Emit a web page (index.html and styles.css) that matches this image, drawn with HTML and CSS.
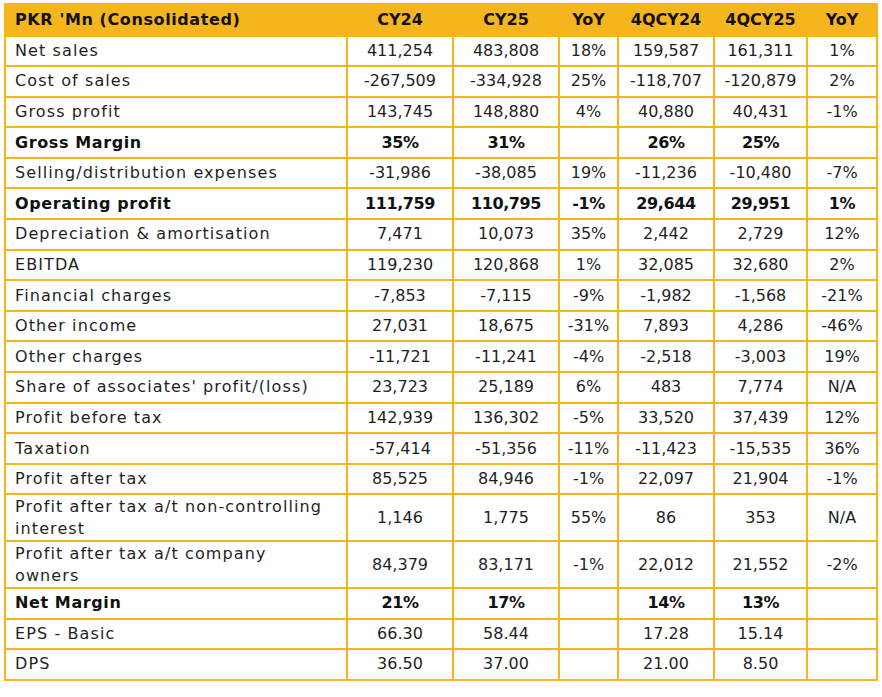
FILE: index.html
```html
<!DOCTYPE html>
<html>
<head>
<meta charset="utf-8">
<link rel="stylesheet" href="styles.css">
</head>
<body>
<div class="page">
<table class="fin">
  <colgroup>
    <col class="c-label"><col class="c-cy24"><col class="c-cy25"><col class="c-yoy1"><col class="c-q24"><col class="c-q25"><col class="c-yoy2">
  </colgroup>
  <thead>
    <tr class="head"><th class="label">PKR 'Mn (Consolidated)</th><th>CY24</th><th>CY25</th><th>YoY</th><th>4QCY24</th><th>4QCY25</th><th>YoY</th></tr>
  </thead>
  <tbody>
    <tr><td class="label">Net sales</td><td>411,254</td><td>483,808</td><td>18%</td><td>159,587</td><td>161,311</td><td>1%</td></tr>
    <tr><td class="label">Cost of sales</td><td>-267,509</td><td>-334,928</td><td>25%</td><td>-118,707</td><td>-120,879</td><td>2%</td></tr>
    <tr><td class="label">Gross profit</td><td>143,745</td><td>148,880</td><td>4%</td><td>40,880</td><td>40,431</td><td>-1%</td></tr>
    <tr class="bold"><td class="label">Gross Margin</td><td>35%</td><td>31%</td><td></td><td>26%</td><td>25%</td><td></td></tr>
    <tr><td class="label">Selling/distribution expenses</td><td>-31,986</td><td>-38,085</td><td>19%</td><td>-11,236</td><td>-10,480</td><td>-7%</td></tr>
    <tr class="bold"><td class="label">Operating profit</td><td>111,759</td><td>110,795</td><td>-1%</td><td>29,644</td><td>29,951</td><td>1%</td></tr>
    <tr><td class="label">Depreciation &amp; amortisation</td><td>7,471</td><td>10,073</td><td>35%</td><td>2,442</td><td>2,729</td><td>12%</td></tr>
    <tr><td class="label">EBITDA</td><td>119,230</td><td>120,868</td><td>1%</td><td>32,085</td><td>32,680</td><td>2%</td></tr>
    <tr><td class="label">Financial charges</td><td>-7,853</td><td>-7,115</td><td>-9%</td><td>-1,982</td><td>-1,568</td><td>-21%</td></tr>
    <tr><td class="label">Other income</td><td>27,031</td><td>18,675</td><td>-31%</td><td>7,893</td><td>4,286</td><td>-46%</td></tr>
    <tr><td class="label">Other charges</td><td>-11,721</td><td>-11,241</td><td>-4%</td><td>-2,518</td><td>-3,003</td><td>19%</td></tr>
    <tr><td class="label">Share of associates' profit/(loss)</td><td>23,723</td><td>25,189</td><td>6%</td><td>483</td><td>7,774</td><td>N/A</td></tr>
    <tr><td class="label">Profit before tax</td><td>142,939</td><td>136,302</td><td>-5%</td><td>33,520</td><td>37,439</td><td>12%</td></tr>
    <tr><td class="label">Taxation</td><td>-57,414</td><td>-51,356</td><td>-11%</td><td>-11,423</td><td>-15,535</td><td>36%</td></tr>
    <tr><td class="label">Profit after tax</td><td>85,525</td><td>84,946</td><td>-1%</td><td>22,097</td><td>21,904</td><td>-1%</td></tr>
    <tr class="double"><td class="label">Profit after tax a/t non-controlling<br>interest</td><td>1,146</td><td>1,775</td><td>55%</td><td>86</td><td>353</td><td>N/A</td></tr>
    <tr class="double"><td class="label">Profit after tax a/t company<br>owners</td><td>84,379</td><td>83,171</td><td>-1%</td><td>22,012</td><td>21,552</td><td>-2%</td></tr>
    <tr class="bold"><td class="label">Net Margin</td><td>21%</td><td>17%</td><td></td><td>14%</td><td>13%</td><td></td></tr>
    <tr><td class="label">EPS - Basic</td><td>66.30</td><td>58.44</td><td></td><td>17.28</td><td>15.14</td><td></td></tr>
    <tr><td class="label">DPS</td><td>36.50</td><td>37.00</td><td></td><td>21.00</td><td>8.50</td><td></td></tr>
  </tbody>
</table>
</div>
</body>
</html>
```

FILE: styles.css
```css
html, body {
  margin: 0;
  padding: 0;
  background: #ffffff;
}

.page {
  padding: 3px 0 0 4px;
}

.fin {
  border-collapse: collapse;
  table-layout: fixed;
  width: 872px;
  font-family: "DejaVu Sans", "Noto Sans", sans-serif;
  font-size: 16px;
  color: #1f1f1f;
}

.c-label { width: 342px; }
.c-cy24 { width: 106px; }
.c-cy25 { width: 106px; }
.c-yoy1 { width: 59px; }
.c-q24 { width: 96px; }
.c-q25 { width: 93px; }
.c-yoy2 { width: 70px; }

.fin th,
.fin td {
  border: 2px solid #f5b51d;
  padding: 0;
  text-align: center;
  vertical-align: middle;
  height: 28.6px;
  line-height: 20px;
  white-space: nowrap;
}

.fin .label {
  text-align: left;
  padding-left: 9px;
  letter-spacing: 1.1px;
}

.head th {
  background: #f5b51d;
  font-weight: bold;
  color: #111111;
  height: 29.5px;
}

.head th.label,
.bold td.label {
  letter-spacing: 0.6px;
}

.bold td {
  font-weight: bold;
  color: #111111;
  letter-spacing: -0.4px;
}

.double td {
  height: 44.8px;
  line-height: 22px;
}
```
